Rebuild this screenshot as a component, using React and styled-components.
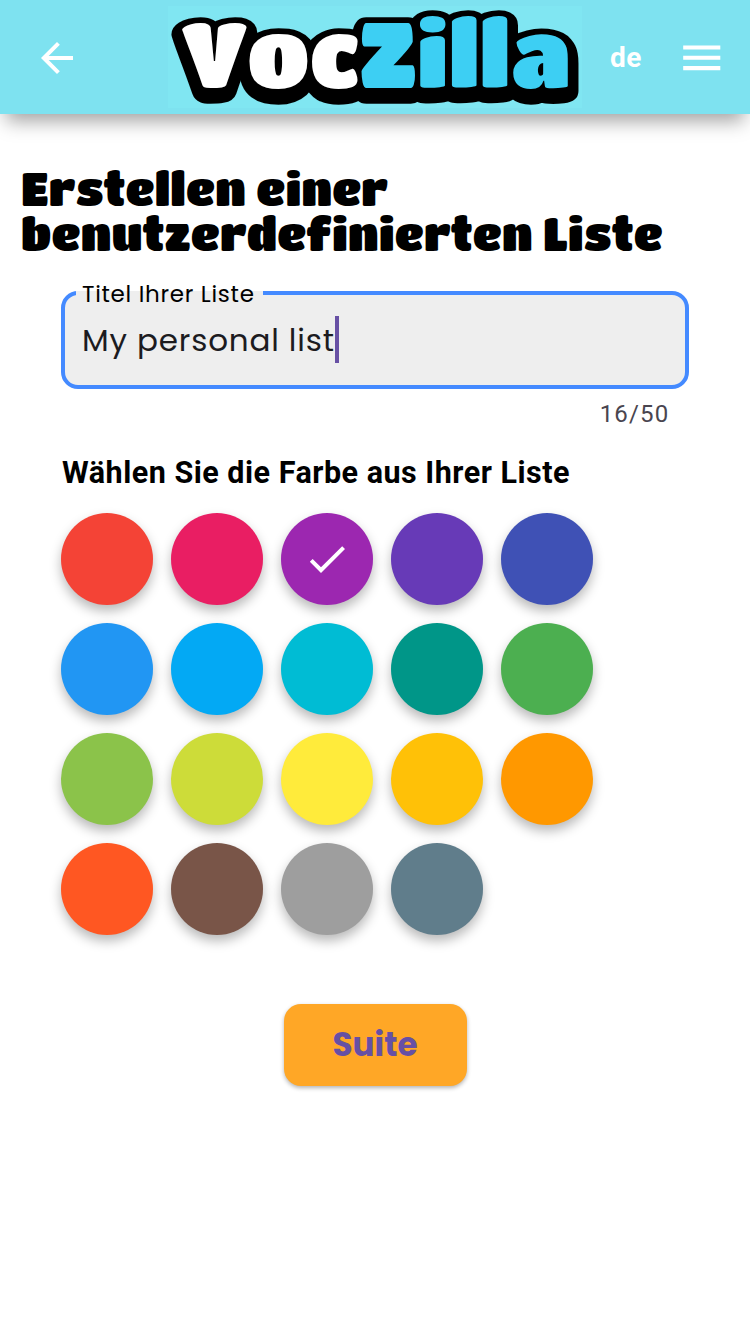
import React, { useState } from 'react';
import styled, { createGlobalStyle } from 'styled-components';

const GlobalStyle = createGlobalStyle`
  *, *::before, *::after { box-sizing: border-box; }
  body { margin: 0; background: #fff; color: #000; font-family: Roboto, "Liberation Sans", sans-serif; }
`;

const Page = styled.div`
  min-height: 1334px;
  background: #fff;
`;

const TopBar = styled.header`
  display: flex;
  align-items: center;
  height: 114px;
  padding: 1px 24px 0 33px;
  background: #7ee2f0;
  box-shadow: 0 13px 18px -6px rgba(0, 0, 0, 0.37);
`;

const IconButton = styled.button`
  display: flex;
  flex: none;
  align-items: center;
  justify-content: center;
  width: 48px;
  height: 50px;
  padding: 0;
  border: 0;
  background: none;
  color: #fff;
`;

const Icon = styled.svg`
  display: block;
  flex: none;
  width: ${(p) => p.$size || 48}px;
  height: ${(p) => p.$size || 48}px;
  fill: currentColor;
`;

const Logo = styled.svg`
  display: block;
  flex: none;
  width: 414px;
  height: 102px;
  margin: 0 0 1px 87px;
  overflow: visible;
  background: #80e6f2;
  font-family: "Titan One", "Lilita One", Inter, sans-serif;
  font-size: 91px;
`;

const Language = styled.span`
  width: 67.5px;
  margin: 1px 0 0 28px;
  color: #fff;
  font-size: 28px;
  font-weight: 700;
  line-height: 34px;
  letter-spacing: 0.5px;
`;

const Title = styled.h1`
  margin: 0;
  padding: 52px 20px 0 21px;
  font-family: "Titan One", "Lilita One", Inter, sans-serif;
  font-size: 45.7px;
  font-weight: 400;
  line-height: 45px;
`;

const Form = styled.main`
  display: flex;
  flex-direction: column;
  padding: 35px 61px 0;
`;

const Field = styled.div`
  position: relative;
  display: flex;
  align-items: center;
  height: 98px;
  padding: 0 17px 1px;
  border: 4px solid #448aff;
  border-radius: 17px;
  background: #eee;
`;

const FieldLabel = styled.label`
  position: absolute;
  top: -14px;
  left: 11px;
  width: 187px;
  padding-left: 6px;
  background: linear-gradient(#fff 10px, #eee 10px);
  font-family: Poppins, "Open Sans", sans-serif;
  font-size: 23px;
  line-height: 26px;
  letter-spacing: 0.7px;
  white-space: nowrap;
`;

const FieldValue = styled.span`
  color: #1c1b1f;
  font-family: Poppins, "Open Sans", sans-serif;
  font-size: 31px;
  line-height: 46px;
  letter-spacing: 0.83px;
  white-space: nowrap;
`;

const Caret = styled.span`
  width: 4px;
  height: 47px;
  background: #6750a4;
`;

const Counter = styled.div`
  align-self: flex-end;
  margin: 11px 19.5px 0 0;
  color: #49454f;
  font-size: 24px;
  line-height: 28px;
  letter-spacing: 1.2px;
`;

const SectionTitle = styled.h2`
  margin: 27px 0 0 1px;
  font-size: 30.5px;
  font-weight: 700;
  line-height: 36px;
  letter-spacing: 0.51px;
  white-space: nowrap;
`;

const Palette = styled.div`
  display: grid;
  grid-template-columns: repeat(5, 92px);
  gap: 18px;
  margin-top: 22.3px;
`;

const Swatch = styled.button`
  display: flex;
  align-items: center;
  justify-content: center;
  width: 92px;
  height: 92px;
  padding: 0;
  border: 0;
  border-radius: 50%;
  background: ${(p) => p.$color};
  color: #fff;
  box-shadow: 0 6px 12px rgba(0, 0, 0, 0.28);
`;

const SubmitButton = styled.button`
  align-self: center;
  width: 183px;
  height: 82px;
  margin-top: 68.7px;
  padding: 1px 0 0;
  border: 0;
  border-radius: 17px;
  background: #ffa726;
  color: #6750a4;
  box-shadow: 0 2px 4px rgba(0, 0, 0, 0.3);
  font-family: Poppins, "Open Sans", sans-serif;
  font-size: 32.6px;
  font-weight: 700;
  line-height: 50px;
`;

const COLORS = [
  '#f44336', '#e91e63', '#9c27b0', '#673ab7', '#3f51b5',
  '#2196f3', '#03a9f4', '#00bcd4', '#009688', '#4caf50',
  '#8bc34a', '#cddc39', '#ffeb3b', '#ffc107', '#ff9800',
  '#ff5722', '#795548', '#9e9e9e', '#607d8b',
];

export default function App() {
  const [color, setColor] = useState('#9c27b0');
  const title = 'My personal list';

  return (
    <Page>
      <GlobalStyle />
      <TopBar>
        <IconButton aria-label="Zurück">
          <Icon viewBox="0 0 24 24">
            <path d="M20 11H7.83l5.59-5.59L12 4l-8 8 8 8 1.41-1.41L7.83 13H20z" />
          </Icon>
        </IconButton>
        <Logo viewBox="168 6 414 102" role="img" aria-label="VocZilla">
          <text x="181.2" y="93.3" fill="#000" stroke="#000" strokeWidth="21.5" strokeLinejoin="round">VocZilla</text>
          <text x="181.2" y="88.3" fill="#fff">Voc<tspan fill="#3dcff3">Zilla</tspan></text>
        </Logo>
        <Language>de</Language>
        <IconButton aria-label="Menü">
          <Icon viewBox="0 0 24 24" $size={49.5}>
            <path d="M3 18h18v-2H3zm0-5h18v-2H3zm0-7v2h18V6z" />
          </Icon>
        </IconButton>
      </TopBar>
      <Title>Erstellen einer<br />benutzerdefinierten Liste</Title>
      <Form>
        <Field>
          <FieldLabel>Titel Ihrer Liste</FieldLabel>
          <FieldValue>{title}</FieldValue>
          <Caret />
        </Field>
        <Counter>{title.length}/50</Counter>
        <SectionTitle>Wählen Sie die Farbe aus Ihrer Liste</SectionTitle>
        <Palette>
          {COLORS.map((c) => (
            <Swatch key={c} $color={c} onClick={() => setColor(c)}>
              {c === color && (
                <Icon viewBox="0 0 24 24">
                  <path d="M9 16.17 4.83 12l-1.42 1.41L9 19 21 7l-1.41-1.41z" />
                </Icon>
              )}
            </Swatch>
          ))}
        </Palette>
        <SubmitButton>Suite</SubmitButton>
      </Form>
    </Page>
  );
}
